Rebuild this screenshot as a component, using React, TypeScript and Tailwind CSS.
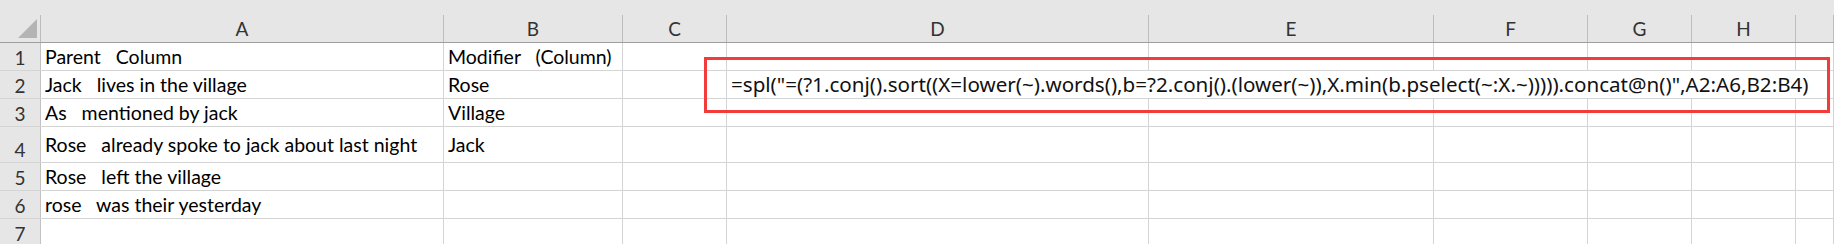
import React from "react";

const COLS = ["A", "B", "C", "D", "E", "F", "G", "H", ""];

const ROWS: { h: string; a: string; b: string }[] = [
  { h: "h-[28px]", a: "Parent   Column", b: "Modifier   (Column)" },
  { h: "h-[28px]", a: "Jack   lives in the village", b: "Rose" },
  { h: "h-[28px]", a: "As   mentioned by jack", b: "Village" },
  { h: "h-[36px]", a: "Rose   already spoke to jack about last night", b: "Jack" },
  { h: "h-[28px]", a: "Rose   left the village", b: "" },
  { h: "h-[28px]", a: "rose   was their yesterday", b: "" },
  { h: "h-[28px]", a: "", b: "" },
];

const FORMULA =
  '=spl("=(?1.conj().sort((X=lower(~).words(),b=?2.conj().(lower(~)),X.min(b.pselect(~:X.~))))).concat@n()",A2:A6,B2:B4)';

const widths = [
  "w-[403px]",
  "w-[179px]",
  "w-[104px]",
  "w-[422px]",
  "w-[285px]",
  "w-[154px]",
  "w-[104px]",
  "w-[104px]",
  "flex-1",
];

export default function App() {
  return (
    <div className="relative w-[1834px] h-[244px] overflow-hidden bg-white font-['Lato',sans-serif] text-[19.5px] text-black">
      {/* top strip */}
      <div className="h-[15px] bg-[#e6e6e6]" />

      {/* column headers */}
      <div className="flex h-[28px] bg-[#e6e6e6] border-b border-[#9e9e9e]">
        <div className="w-[41px] shrink-0 border-r border-[#bdbdbd] relative">
          <svg className="absolute left-[17px] top-[4px]" width="20" height="20" viewBox="0 0 20 20">
            <polygon points="20,0 20,19 1,19" fill="#b4b4b4" />
          </svg>
        </div>
        {COLS.map((c, i) => (
          <div
            key={i}
            className={`${widths[i]} shrink-0 flex items-center justify-center border-r border-[#bdbdbd] text-[#333] text-[19px] leading-none`}
          >
            {c}
          </div>
        ))}
      </div>

      {/* body rows */}
      {ROWS.map((r, ri) => (
        <div key={ri} className={`flex ${r.h} border-b border-[#d4d4d4]`}>
          <div className="w-[41px] shrink-0 flex items-end justify-center pb-[3px] bg-[#e6e6e6] border-r border-[#c2c2c2] text-[#333] text-[19px] leading-none">
            {ri + 1}
          </div>
          {widths.map((w, ci) => {
            const overflowRow = ri === 1 && ci >= 3 && ci <= 7;
            return (
              <div
                key={ci}
                className={`${w} shrink-0 flex items-center px-[4px] whitespace-pre ${
                  overflowRow ? "" : "border-r border-[#d4d4d4]"
                } ${ri === 1 && ci === 3 ? "overflow-visible relative z-10" : "overflow-hidden"}`}
              >
                {ci === 0 && r.a}
                {ci === 1 && r.b}
                {ri === 1 && ci === 3 && (
                  <span className="font-['Noto_Sans',sans-serif] text-[20.6px] leading-none text-[#111]">
                    {FORMULA}
                  </span>
                )}
              </div>
            );
          })}
        </div>
      ))}

      {/* highlight box */}
      <div className="absolute left-[704px] top-[57px] w-[1126px] h-[56px] border-[3px] border-[#f23b3b] z-20" />
    </div>
  );
}
